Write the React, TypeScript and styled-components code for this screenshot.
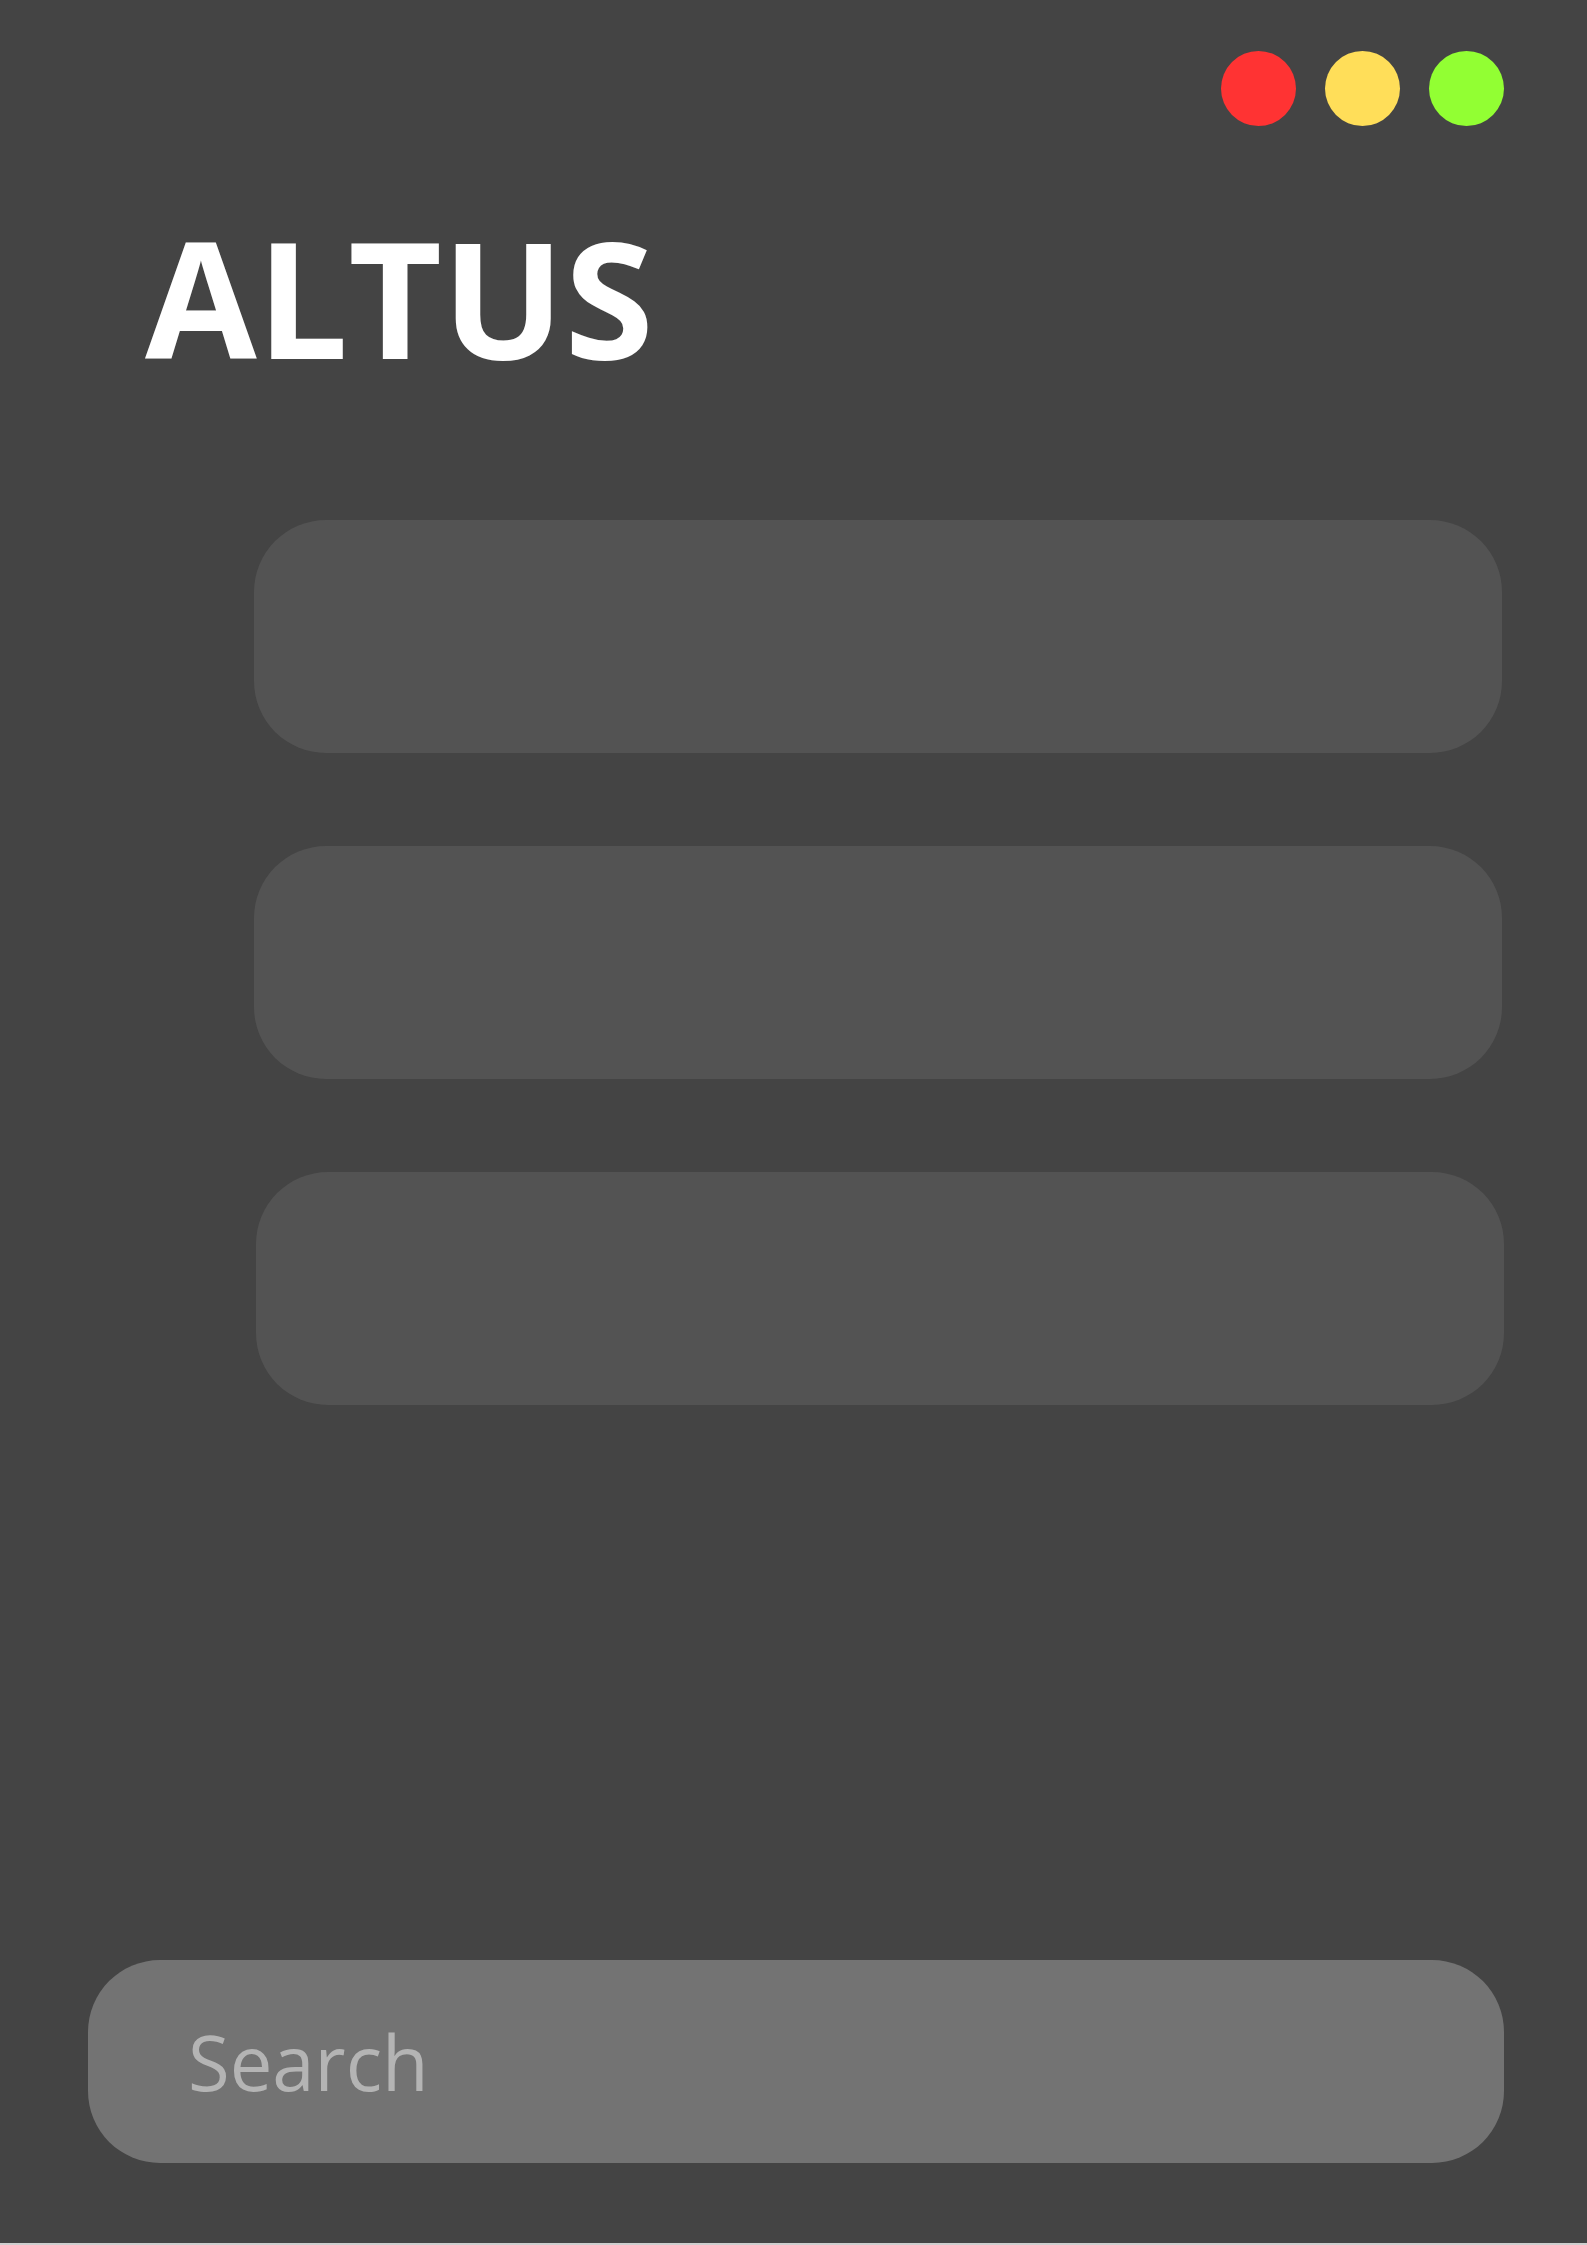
import React from "react";
import styled, { createGlobalStyle } from "styled-components";

const Global = createGlobalStyle`
  html, body { margin: 0; padding: 0; background: #cfcfcf; }
  body { font-family: "Open Sans", "Noto Sans", sans-serif; }
  * { box-sizing: border-box; }
`;

const Window = styled.div`
  width: 1587px;
  height: 2243px;
  background: #444444;
  display: flex;
  flex-direction: column;
`;

const TitleBar = styled.div`
  display: flex;
  justify-content: flex-end;
  gap: 29px;
  padding: 51px 83px 0 0;
`;

const Dot = styled.span<{ $color: string }>`
  width: 75px;
  height: 75px;
  border-radius: 50%;
  background: ${(p) => p.$color};
`;

const Brand = styled.h1`
  margin: 0;
  padding: 89px 0 0 145px;
  font-family: "Open Sans", "Noto Sans", sans-serif;
  font-weight: 700;
  font-size: 162px;
  line-height: 162px;
  letter-spacing: 0px;
  color: #ffffff;
`;

const List = styled.div`
  display: flex;
  flex-direction: column;
  gap: 93px;
  padding: 143px 85px 0 254px;
`;

const Card = styled.div<{ $shift?: number }>`
  height: 233px;
  border-radius: 72px;
  background: #535353;
  transform: translateX(${(p) => p.$shift ?? 0}px);
`;

const SearchBar = styled.div`
  margin: auto 83px 80px 88px;
  height: 203px;
  border-radius: 72px;
  background: #737373;
  display: flex;
  align-items: center;
  padding-left: 100px;
`;

const SearchInput = styled.input`
  border: none;
  outline: none;
  background: transparent;
  width: 100%;
  font-family: "Open Sans", "Noto Sans", sans-serif;
  font-size: 76px;
  color: #b4b4b4;
  padding: 0;
  &::placeholder { color: #b4b4b4; opacity: 1; }
`;

export default function App() {
  return (
    <>
      <Global />
      <Window>
        <TitleBar>
          <Dot $color="#ff3333" />
          <Dot $color="#ffde59" />
          <Dot $color="#92ff33" />
        </TitleBar>
        <Brand>ALTUS</Brand>
        <List>
          <Card />
          <Card />
          <Card $shift={2} />
        </List>
        <SearchBar>
          <SearchInput placeholder="Search" />
        </SearchBar>
      </Window>
    </>
  );
}
